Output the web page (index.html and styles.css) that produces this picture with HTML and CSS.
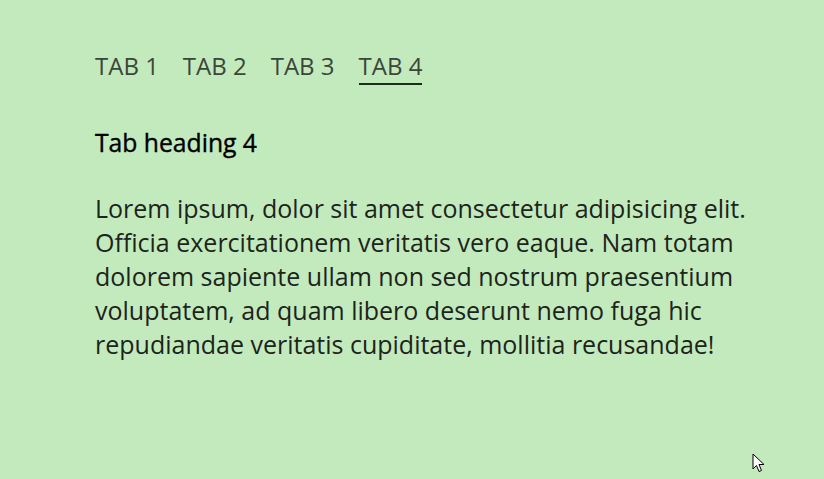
FILE: index.html
```html
<!DOCTYPE html>
<html>
<head>
<meta charset="utf-8">
<link rel="stylesheet" href="styles.css">
</head>
<body>
<div class="page">
  <nav class="tabs">
    <span class="tab">TAB 1</span>
    <span class="tab">TAB 2</span>
    <span class="tab">TAB 3</span>
    <span class="tab active">TAB 4</span>
  </nav>
  <h2 class="heading">Tab heading 4</h2>
  <p class="text">Lorem ipsum, dolor sit amet consectetur adipisicing elit. Officia exercitationem veritatis vero eaque. Nam totam dolorem sapiente ullam non sed nostrum praesentium voluptatem, ad quam libero deserunt nemo fuga hic repudiandae veritatis cupiditate, mollitia recusandae!</p>
</div>
<svg class="cursor" width="14" height="20" viewBox="0 0 14 20">
  <path d="M1 1 L1 16 L4.5 12.5 L7 18.5 L9.5 17.5 L7 11.5 L12 11.5 Z" fill="#fff" stroke="#000" stroke-width="1" stroke-linejoin="miter"/>
</svg>
</body>
</html>
```
FILE: styles.css
```css
html, body {
  margin: 0;
  padding: 0;
  background: #c3eabc;
  height: 100%;
}
body {
  font-family: "Open Sans", "Liberation Sans", sans-serif;
  overflow: hidden;
}
.page {
  padding: 49px 0 0 95px;
  width: 680px;
}
.tabs {
  display: flex;
  gap: 24px;
  font-size: 24px;
  color: #3b463b;
}
.tab {
  padding-bottom: 1px;
  border-bottom: 2px solid transparent;
}
.tab.active {
  border-bottom-color: #1f2a1f;
}
.heading {
  margin: 41px 0 0;
  font-size: 24.7px;
  font-weight: 400;
  -webkit-text-stroke: 0.4px #000;
  color: #000;
}
.text {
  margin: 32px 0 0;
  font-size: 25px;
  line-height: 34px;
  color: #1c241c;
}
.cursor {
  position: absolute;
  left: 752px;
  top: 453px;
}
```
